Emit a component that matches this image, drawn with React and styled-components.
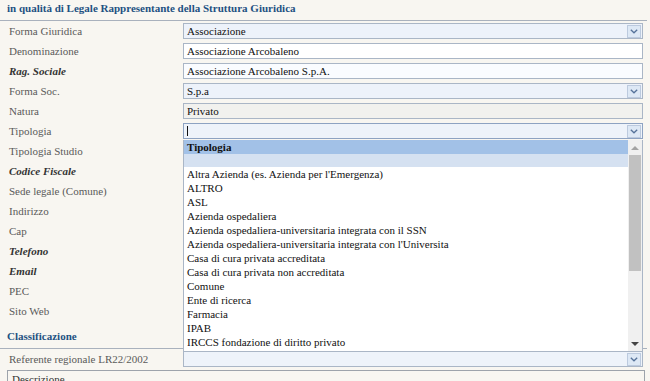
import React from "react";
import styled, { createGlobalStyle } from "styled-components";

const GlobalStyle = createGlobalStyle`
  html, body {
    margin: 0;
    padding: 0;
    background: #f8f6f1;
    overflow: hidden;
  }
`;

const Page = styled.div`
  position: relative;
  width: 650px;
  height: 381px;
  overflow: hidden;
  background: #f8f6f1;
  font-family: "Liberation Serif", "DejaVu Serif", serif;
  font-size: 11px;
`;

const SectionTitle = styled.div`
  margin-right: ${p => p.$inset || 3}px;
  padding: ${p => p.$pad || "2px 7px 0"};
  height: ${p => p.$h || 18}px;
  line-height: 13px;
  font-weight: bold;
  color: #1e5182;
  border-bottom: 1px solid #a9b1bd;
`;

const Row = styled.div`
  display: grid;
  grid-template-columns: 174px 460px;
  align-items: center;
  height: 20px;
  padding-left: 9px;
`;

const Label = styled.span`
  color: ${p => (p.$strong ? "#333" : "#5a5a5a")};
  font-weight: ${p => (p.$strong ? "bold" : "normal")};
  font-style: ${p => (p.$strong ? "italic" : "normal")};
  white-space: nowrap;
`;

const Field = styled.div`
  box-sizing: border-box;
  height: 16px;
  display: flex;
  align-items: center;
  justify-content: space-between;
  padding: 0 1px 0 3px;
  border: 1px solid ${p => (p.$focus ? "#8ea3c2" : "#aab6c6")};
  background: ${p => p.$bg || "#fff"};
  color: #111;
  white-space: nowrap;
`;

const Caret = styled.span`
  width: 1px;
  height: 10px;
  background: #111;
`;

const ArrowBtn = styled.span`
  box-sizing: border-box;
  width: 14px;
  height: 13px;
  border: 1px solid #bccade;
  background: #dde8f5;
  display: flex;
  align-items: center;
  justify-content: center;
`;

const Chevron = () => (
  <ArrowBtn>
    <svg width="8" height="5" viewBox="0 0 8 5">
      <polyline points="0.8,0.8 4,3.8 7.2,0.8" fill="none" stroke="#56739a" strokeWidth="1.3" />
    </svg>
  </ArrowBtn>
);

const Dropdown = styled.div`
  position: absolute;
  left: 183px;
  top: 140px;
  width: 460px;
  height: 212px;
  box-sizing: border-box;
  border: 1px solid #aab6c6;
  border-top: none;
  background: #fff;
  display: flex;
`;

const List = styled.div`
  flex: 1;
  overflow: hidden;
`;

const Option = styled.div`
  height: 14px;
  line-height: 14px;
  padding-left: 3px;
  color: #111;
  white-space: nowrap;
  font-weight: ${p => (p.$head ? "bold" : "normal")};
  background: ${p => p.$bg || "transparent"};
`;

const Spacer = styled.div`
  height: ${p => p.$h}px;
  background: ${p => p.$bg || "transparent"};
`;

const Scrollbar = styled.div`
  width: 14px;
  background: #f0f0f0;
  display: flex;
  flex-direction: column;
  align-items: center;
`;

const ScrollArrow = styled.div`
  width: 0;
  height: 0;
  margin: ${p => p.$m};
  border-left: 4px solid transparent;
  border-right: 4px solid transparent;
  ${p => (p.$down ? "border-top: 4px solid #444;" : "border-bottom: 4px solid #a3a3a3;")}
`;

const Thumb = styled.div`
  width: 12px;
  height: 116px;
  background: #c1c1c1;
`;

const Fill = styled.div`
  flex: 1;
`;

const DescBox = styled.div`
  margin: 1px 5px 0 7px;
  height: 20px;
  box-sizing: border-box;
  border: 1px solid #9da3ab;
  border-bottom: none;
  padding: 2px 4px;
  color: #333;
  line-height: 12px;
`;

const rows = [
  { label: "Forma Giuridica", value: "Associazione", bg: "#edf2fa", select: true },
  { label: "Denominazione", value: "Associazione Arcobaleno", bg: "#fff" },
  { label: "Rag. Sociale", strong: true, value: "Associazione Arcobaleno S.p.A.", bg: "#fafcff" },
  { label: "Forma Soc.", value: "S.p.a", bg: "#edf2fa", select: true },
  { label: "Natura", value: "Privato", bg: "#f1f1ee" },
  { label: "Tipologia", caret: true, bg: "#eef3fa", select: true, focus: true },
  { label: "Tipologia Studio" },
  { label: "Codice Fiscale", strong: true },
  { label: "Sede legale (Comune)" },
  { label: "Indirizzo" },
  { label: "Cap" },
  { label: "Telefono", strong: true },
  { label: "Email", strong: true },
  { label: "PEC" },
  { label: "Sito Web" },
];

const options = [
  "Altra Azienda (es. Azienda per l'Emergenza)",
  "ALTRO",
  "ASL",
  "Azienda ospedaliera",
  "Azienda ospedaliera-universitaria integrata con il SSN",
  "Azienda ospedaliera-universitaria integrata con l'Universita",
  "Casa di cura privata accreditata",
  "Casa di cura privata non accreditata",
  "Comune",
  "Ente di ricerca",
  "Farmacia",
  "IPAB",
  "IRCCS fondazione di diritto privato",
];

export default function App() {
  return (
    <Page>
      <GlobalStyle />
      <SectionTitle>in qualità di Legale Rappresentante della Struttura Giuridica</SectionTitle>
      {rows.map(r => (
        <Row key={r.label}>
          <Label $strong={r.strong}>{r.label}</Label>
          {r.bg ? (
            <Field $bg={r.bg} $focus={r.focus}>
              {r.caret ? <Caret /> : <span>{r.value}</span>}
              {r.select && <Chevron />}
            </Field>
          ) : (
            <span />
          )}
        </Row>
      ))}
      <SectionTitle $inset={0} $pad="9px 7px 0" $h={18}>Classificazione</SectionTitle>
      <Row>
        <Label>Referente regionale LR22/2002</Label>
        <Field $bg="#eef3fa">
          <span />
          <Chevron />
        </Field>
      </Row>
      <DescBox>Descrizione</DescBox>

      <Dropdown>
        <List>
          <Option $head $bg="#a2c1e7">Tipologia</Option>
          <Spacer $h={13} $bg="#d5e1f1" />
          {options.map(o => (
            <Option key={o}>{o}</Option>
          ))}
        </List>
        <Scrollbar>
          <ScrollArrow $m="6px 0 5px" />
          <Thumb />
          <Fill />
          <ScrollArrow $down $m="0 0 5px" />
        </Scrollbar>
      </Dropdown>
    </Page>
  );
}
